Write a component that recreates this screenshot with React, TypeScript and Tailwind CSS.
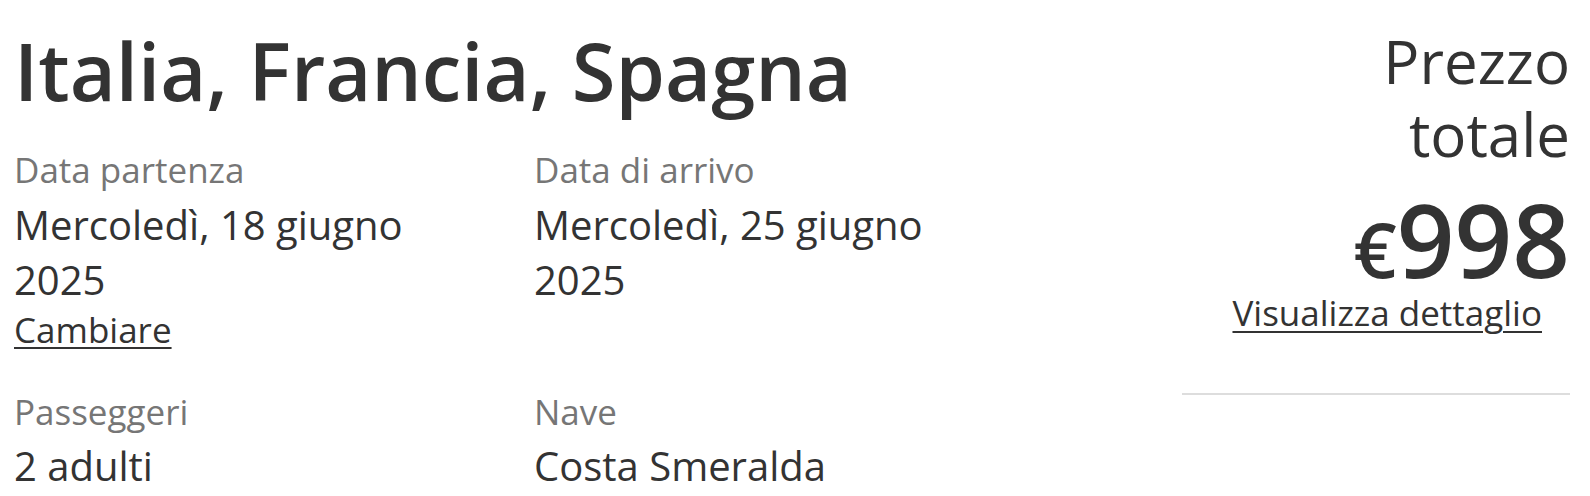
import React from 'react';

const font = { fontFamily: '"Open Sans", "Noto Sans", sans-serif' };

export default function App() {
  return (
    <div style={font} className="flex w-[1590px] bg-white text-[#333333] pl-[14px] pr-[20px] pt-[22px]">
      {/* Left: cruise summary */}
      <div className="flex-1">
        <h1 className="text-[79.5px] font-semibold leading-[96px]">Italia, Francia, Spagna</h1>
        <div className="grid grid-cols-[440px_440px] gap-x-[80px] gap-y-[38px] mt-[30px]">
          <div>
            <div className="text-[35px] leading-[44px] text-[#767676]">Data partenza</div>
            <div className="text-[40px] leading-[55px] mt-[5px]">Mercoledì, 18 giugno 2025</div>
            <a href="#" className="inline-block mt-[1px] text-[35px] leading-[44px] underline decoration-2 underline-offset-[4px]">Cambiare</a>
          </div>
          <div>
            <div className="text-[35px] leading-[44px] text-[#767676]">Data di arrivo</div>
            <div className="text-[40px] leading-[55px] mt-[5px]">Mercoledì, 25 giugno 2025</div>
          </div>
          <div>
            <div className="text-[35px] leading-[44px] text-[#767676]">Passeggeri</div>
            <div className="text-[40px] leading-[55px] mt-[4px]">2 adulti</div>
          </div>
          <div>
            <div className="text-[35px] leading-[44px] text-[#767676]">Nave</div>
            <div className="text-[40px] leading-[55px] mt-[4px]">Costa Smeralda</div>
          </div>
        </div>
      </div>

      {/* Right: price panel */}
      <div className="w-[388px] flex flex-col items-end">
        <div className="text-[60px] leading-[73px] text-right mt-[3px]">
          Prezzo<br />totale
        </div>
        <div className="font-semibold leading-none mt-[18px] flex items-baseline">
          <span className="text-[76px]">€</span>
          <span className="text-[101px]">998</span>
        </div>
        <a href="#" className="mt-[3px] mr-[28px] text-[35px] leading-[40px] underline decoration-2 underline-offset-[5px]">Visualizza dettaglio</a>
        <div className="w-full border-t-2 border-[#dddddd] mt-[60px]" />
      </div>
    </div>
  );
}
